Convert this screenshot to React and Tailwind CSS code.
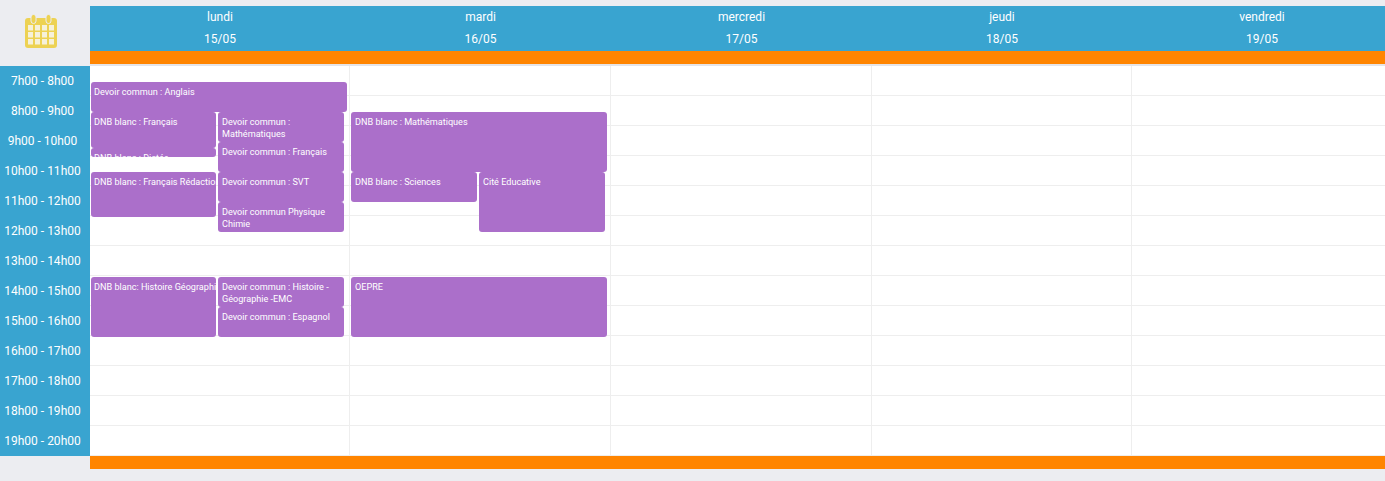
const days = [
  ["lundi", "15/05"],
  ["mardi", "16/05"],
  ["mercredi", "17/05"],
  ["jeudi", "18/05"],
  ["vendredi", "19/05"],
];

const hours = [7, 8, 9, 10, 11, 12, 13, 14, 15, 16, 17, 18, 19];

// positions are relative to the day column
const events = [
  [
    { title: "Devoir commun : Anglais", pos: "left-[1px] top-[16px] w-[256px] h-[30px]" },
    { title: "DNB blanc : Français", pos: "left-[1px] top-[46px] w-[125px] h-[36px]" },
    { title: "DNB blanc : Dictée", pos: "left-[1px] top-[82px] w-[125px] h-[9px]" },
    { title: "DNB blanc : Français Rédaction", pos: "left-[1px] top-[106px] w-[125px] h-[45px] whitespace-nowrap" },
    { title: "DNB blanc: Histoire Géographie", pos: "left-[1px] top-[211px] w-[125px] h-[60px] whitespace-nowrap" },
    { title: "Devoir commun : Mathématiques", pos: "left-[128px] top-[46px] w-[126px] h-[30px] pl-[4px]" },
    { title: "Devoir commun : Français", pos: "left-[128px] top-[76px] w-[126px] h-[30px] pl-[4px]" },
    { title: "Devoir commun : SVT", pos: "left-[128px] top-[106px] w-[126px] h-[30px] pl-[4px]" },
    { title: "Devoir commun Physique Chimie", pos: "left-[128px] top-[136px] w-[126px] h-[30px] pl-[4px]" },
    { title: "Devoir commun : Histoire - Géographie -EMC", pos: "left-[128px] top-[211px] w-[126px] h-[30px] pl-[4px]" },
    { title: "Devoir commun : Espagnol", pos: "left-[128px] top-[241px] w-[126px] h-[30px] pl-[4px]" },
  ],
  [
    { title: "DNB blanc : Mathématiques", pos: "left-[1px] top-[46px] w-[256px] h-[60px] pl-[4px]" },
    { title: "DNB blanc : Sciences", pos: "left-[1px] top-[106px] w-[126px] h-[30px] pl-[4px]" },
    { title: "Cité Educative", pos: "left-[129px] top-[106px] w-[126px] h-[60px] pl-[4px]" },
    { title: "OEPRE", pos: "left-[1px] top-[211px] w-[256px] h-[60px] pl-[4px]" },
  ],
  [],
  [],
  [],
];

function CalendarIcon() {
  return (
    <svg width="32" height="34" viewBox="0 0 32 34" fill="none">
      <rect x="0" y="4" width="32" height="30" rx="3" fill="#EDD253" />
      <rect x="6" y="0.5" width="5" height="9" rx="2.5" fill="#EDD253" stroke="#ECEDF1" strokeWidth="1" />
      <rect x="21" y="0.5" width="5" height="9" rx="2.5" fill="#EDD253" stroke="#ECEDF1" strokeWidth="1" />
      {[11, 18, 25].map((y) =>
        [3, 10, 17, 24].map((x) => (
          <rect key={`${x}-${y}`} x={x} y={y} width="5" height="5.5" fill="#F6F1DA" />
        ))
      )}
    </svg>
  );
}

export default function App() {
  return (
    <div className="h-[481px] w-full overflow-hidden bg-[#ECEDF1] pt-[6px] font-['Roboto',sans-serif] text-white">
      {/* top header */}
      <div className="flex">
        <div className="h-[60px] w-[90px] shrink-0 pl-[25px] pt-[8px]">
          <CalendarIcon />
        </div>
        <div className="shrink-0">
          <div className="grid h-[45px] grid-cols-[260px_261px_261px_260px_260px] bg-[#39A4D0]">
            {days.map(([name, date]) => (
              <div key={name} className="text-center text-[12px] leading-[22px]">
                <div>{name}</div>
                <div>{date}</div>
              </div>
            ))}
          </div>
          <div className="h-[13px] bg-[#FF8500]" />
          <div className="h-[2px] bg-[#E4E4E8]" />
        </div>
      </div>

      {/* body */}
      <div className="flex">
        <div className="w-[90px] shrink-0 bg-[#39A4D0] pr-[5px]">
          {hours.map((h) => (
            <div key={h} className="h-[30px] text-center text-[12px] leading-[30px]">
              {h}h00 - {h + 1}h00
            </div>
          ))}
        </div>
        <div className="grid shrink-0 grid-cols-[260px_261px_261px_260px_260px] bg-white">
          {days.map(([name], i) => (
            <div key={name} className="relative">
              {hours.map((h) => (
                <div key={h} className="h-[30px] border-r border-b border-[#EEEEEE]" />
              ))}
              {events[i].map((ev) => (
                <div
                  key={ev.title}
                  className={`absolute overflow-hidden rounded-[3px] bg-[#AB6FCA] px-[3px] pt-[4px] text-[9.1px] leading-[12px] ${ev.pos}`}
                >
                  {ev.title}
                </div>
              ))}
            </div>
          ))}
        </div>
      </div>

      {/* bottom bar */}
      <div className="ml-[90px] h-[13px] bg-[#FF8500]" />
    </div>
  );
}
